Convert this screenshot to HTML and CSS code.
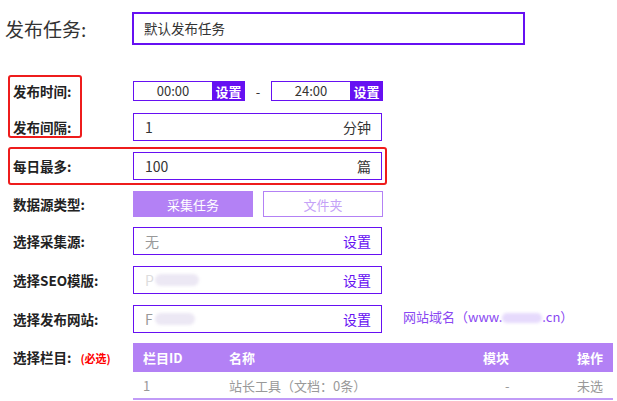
FILE: index.html
```html
<!DOCTYPE html>
<html lang="zh-CN">
<head>
    <meta charset="UTF-8">
    <meta name="viewport" content="width=device-width, initial-scale=1.0">
    <title>发布任务</title>
    <link rel="stylesheet" href="styles.css">
</head>
<body>
    <div class="page">
        <div class="task-row">
            <div class="task-title">发布任务:</div>
            <div class="task-input">默认发布任务</div>
        </div>

        <div class="form">
            <div class="mark mark-time"></div>
            <div class="mark mark-max"></div>

            <div class="row row-time">
                <div class="label">发布时间:</div>
                <div class="field time-field">
                    <div class="time-box">00:00</div>
                    <button class="time-btn">设置</button>
                    <span class="dash">-</span>
                    <div class="time-box">24:00</div>
                    <button class="time-btn">设置</button>
                </div>
            </div>

            <div class="row">
                <div class="label">发布间隔:</div>
                <div class="box"><span class="val">1</span><span class="unit">分钟</span></div>
            </div>

            <div class="row">
                <div class="label">每日最多:</div>
                <div class="box"><span class="val">100</span><span class="unit">篇</span></div>
            </div>

            <div class="row row-source">
                <div class="label">数据源类型:</div>
                <div class="tabs">
                    <button class="tab active">采集任务</button>
                    <button class="tab">文件夹</button>
                </div>
            </div>

            <div class="row">
                <div class="label">选择采集源:</div>
                <div class="box"><span class="val muted">无</span><span class="set">设置</span></div>
            </div>

            <div class="row">
                <div class="label">选择SEO模版:</div>
                <div class="box"><span class="val muted faint">P<span class="blur blur-a"></span></span><span class="set">设置</span></div>
            </div>

            <div class="row">
                <div class="label">选择发布网站:</div>
                <div class="box"><span class="val muted">F<span class="blur blur-b"></span></span><span class="set">设置</span></div>
                <a class="domain" href="#">网站域名（www.<span class="blur blur-c"></span>.cn）</a>
            </div>

            <div class="row row-column">
                <div class="label">选择栏目:<span class="required">(必选)</span></div>
                <table class="columns">
                    <thead>
                        <tr>
                            <th class="c-id">栏目ID</th>
                            <th class="c-name">名称</th>
                            <th class="c-mod">模块</th>
                            <th class="c-op">操作</th>
                        </tr>
                    </thead>
                    <tbody>
                        <tr>
                            <td class="c-id">1</td>
                            <td class="c-name">站长工具（文档：0条）</td>
                            <td class="c-mod">-</td>
                            <td class="c-op">未选</td>
                        </tr>
                    </tbody>
                </table>
            </div>
        </div>
    </div>
</body>
</html>
```

FILE: styles.css
```css
body {
    margin: 0;
    background: #fff;
    color: #222;
    font-family: "Noto Sans CJK SC", "Noto Sans", sans-serif;
}
.page {
    padding: 12px 0 0 0;
}

.task-row {
    display: flex;
    align-items: center;
}
.task-title {
    width: 132px;
    padding-left: 5px;
    box-sizing: border-box;
    font-size: 19px;
    color: #333;
}
.task-input {
    width: 393px;
    height: 33px;
    box-sizing: border-box;
    border: 2px solid #6610f2;
    padding-left: 10px;
    font-size: 13.5px;
    line-height: 29px;
    color: #333;
}

.form {
    position: relative;
    margin-top: 36px;
}
.mark {
    position: absolute;
    border: 2px solid #ee1c1c;
    border-radius: 3px;
    pointer-events: none;
}
.mark-time {
    left: 8px;
    top: -6px;
    width: 70px;
    height: 59px;
}
.mark-max {
    left: 8px;
    top: 66px;
    width: 375px;
    height: 34px;
}

.row {
    display: flex;
    align-items: center;
    height: 28px;
    margin-bottom: 11px;
}
.row-time {
    height: 20px;
    margin-bottom: 12px;
}
.row-source {
    height: 26px;
    margin-bottom: 10px;
}
.label {
    width: 133px;
    padding-left: 13px;
    box-sizing: border-box;
    font-size: 13.5px;
    font-weight: bold;
    color: #222;
    white-space: nowrap;
}

.time-field {
    display: flex;
    align-items: center;
}
.time-box {
    width: 79px;
    height: 20px;
    box-sizing: border-box;
    border: 1px solid #6610f2;
    border-right: none;
    text-align: center;
    font-size: 13px;
    line-height: 18px;
    color: #333;
}
.time-btn {
    width: 33px;
    height: 20px;
    border: none;
    padding: 0;
    background: #6610f2;
    color: #fff;
    font-family: inherit;
    font-size: 13px;
    font-weight: bold;
}
.dash {
    width: 26px;
    text-align: center;
    font-size: 13px;
    color: #333;
}

.box {
    width: 249px;
    height: 28px;
    box-sizing: border-box;
    border: 1px solid #6610f2;
    display: flex;
    align-items: center;
    justify-content: space-between;
    padding: 0 10px 0 11px;
    font-size: 14px;
    color: #333;
}
.val {
    display: flex;
    align-items: center;
}
.muted {
    color: #999;
}
.faint {
    color: #ddd;
}
.set {
    color: #6610f2;
}
.blur {
    display: inline-block;
    height: 12px;
    border-radius: 6px;
    background: #ece8f4;
    filter: blur(1.5px);
}
.blur-a {
    width: 44px;
    margin-left: 1px;
}
.blur-b {
    width: 40px;
    margin-left: 2px;
}
.blur-c {
    width: 40px;
    height: 10px;
    background: #e6dafc;
    vertical-align: middle;
}
.domain {
    margin-left: 21px;
    margin-top: -5px;
    font-size: 13px;
    color: #8a47f2;
    text-decoration: none;
}

.tabs {
    display: flex;
    gap: 10px;
}
.tab {
    width: 120px;
    height: 26px;
    box-sizing: border-box;
    border: 1px solid #b381f5;
    background: #fff;
    color: #c4a2f7;
    font-family: inherit;
    font-size: 13px;
    padding: 0;
}
.tab.active {
    background: #b381f5;
    color: #fff;
}

.row-column {
    align-items: flex-start;
    height: auto;
    margin-top: -1px;
}
.row-column .label {
    padding-top: 4px;
}
.required {
    color: #f00;
    font-size: 11px;
    margin-left: 9px;
}
.columns {
    width: 480px;
    table-layout: fixed;
    border-collapse: collapse;
    font-size: 13px;
}
.columns th,
.columns td {
    box-sizing: border-box;
    padding: 0;
    white-space: nowrap;
    text-align: left;
}
.columns th {
    background: #b381f5;
    color: #fff;
    height: 29px;
    font-weight: bold;
}
.columns td {
    height: 27px;
    color: #999;
    border-bottom: 2px solid #c19bf7;
}
.columns .c-id {
    width: 96px;
    padding-left: 10px;
}
.columns .c-name {
    width: 254px;
}
.columns .c-mod {
    width: 80px;
}
.columns .c-op {
    text-align: right;
    padding-right: 10px;
}
.columns td.c-mod {
    padding-left: 22px;
}
```
